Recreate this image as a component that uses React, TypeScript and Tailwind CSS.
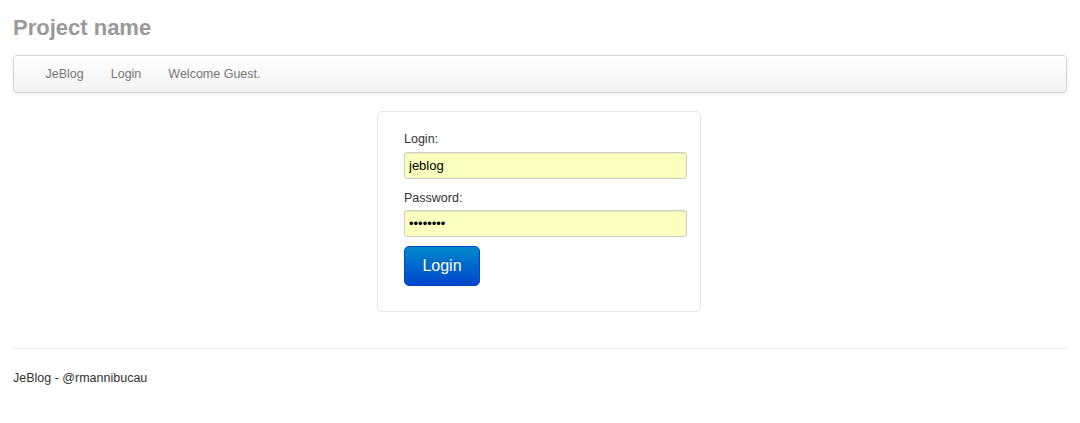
export default function App() {
  return (
    <div className="min-h-screen bg-white px-[13px] text-[12.5px] text-[#333] [font-family:'Liberation_Sans',Arial,sans-serif]">
      <h3 className="pt-[8px] text-[22px] font-bold leading-[40px] text-[#999]">Project name</h3>

      <div className="mt-[7px] flex h-[38px] items-center rounded-[4px] border border-[#d4d4d4] bg-gradient-to-b from-white to-[#f2f2f2] pl-[18px] shadow-[0_1px_4px_rgba(0,0,0,0.065)]">
        <a className="px-[13.5px] text-[#777]">JeBlog</a>
        <a className="px-[13.5px] text-[#777]">Login</a>
        <span className="px-[13.5px] text-[#777]">Welcome Guest.</span>
      </div>

      <div className="mt-[18px] ml-[364px] w-[324px] rounded-[5px] border border-[#e5e5e5] pt-[18px] pr-[13px] pb-[25px] pl-[26px]">
        <label className="block leading-[18px]">Login:</label>
        <input
          readOnly
          defaultValue="jeblog"
          className="mt-[4px] block h-[27px] w-full rounded-[3px] border border-[#ccc] bg-[#faffbd] px-[4px] text-[13px] text-black shadow-[inset_0_1px_1px_rgba(0,0,0,0.075)] outline-none"
        />
        <label className="mt-[10px] block leading-[18px]">Password:</label>
        <input
          readOnly
          type="password"
          defaultValue="jeblogpw"
          className="mt-[3px] block h-[27px] w-full rounded-[3px] border border-[#ccc] bg-[#faffbd] px-[4px] text-[13px] text-black shadow-[inset_0_1px_1px_rgba(0,0,0,0.075)] outline-none"
        />
        <button
          type="button"
          className="mt-[9px] h-[40px] w-[76px] rounded-[5px] border border-[#0044cc] bg-gradient-to-b from-[#0088cc] to-[#0044cc] text-[16px] text-white [text-shadow:0_-1px_0_rgba(0,0,0,0.25)]"
        >
          Login
        </button>
      </div>

      <hr className="mt-[36px] border-0 border-t border-[#eee]" />
      <footer className="pt-[20px] leading-[18px]">JeBlog - @rmannibucau</footer>
    </div>
  )
}
